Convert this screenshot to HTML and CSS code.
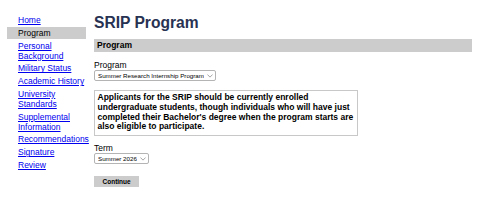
FILE: index.html
```html
<!DOCTYPE html>
<html lang="en">
<head>
    <meta charset="UTF-8">
    <meta name="viewport" content="width=device-width, initial-scale=1.0">
    <title>SRIP Program</title>
    <link rel="stylesheet" href="styles.css">
</head>
<body>
    <div class="page">
        <!-- Side Navigation -->
        <nav class="sidebar">
            <a class="nav-item" href="#">Home</a>
            <span class="nav-item current">Program</span>
            <a class="nav-item" href="#">Personal Background</a>
            <a class="nav-item" href="#">Military Status</a>
            <a class="nav-item" href="#">Academic History</a>
            <a class="nav-item" href="#">University Standards</a>
            <a class="nav-item" href="#">Supplemental Information</a>
            <a class="nav-item" href="#">Recommendations</a>
            <a class="nav-item" href="#">Signature</a>
            <a class="nav-item" href="#">Review</a>
        </nav>

        <!-- Main Form -->
        <main class="content">
            <h1 class="page-title">SRIP Program</h1>
            <div class="section-bar">Program</div>

            <label class="field-label" for="program">Program</label>
            <div class="select-wrap">
                <select id="program" class="select">
                    <option>Summer Research Internship Program</option>
                </select>
                <svg class="chevron" viewBox="0 0 8 5" width="6" height="4"><path d="M0.5 0.5 L4 4 L7.5 0.5" fill="none" stroke="#777" stroke-width="0.9"/></svg>
            </div>

            <div class="notice">
                Applicants for the SRIP should be currently enrolled undergraduate students, though individuals who will have just completed their Bachelor's degree when the program starts are also eligible to participate.
            </div>

            <label class="field-label" for="term">Term</label>
            <div class="select-wrap">
                <select id="term" class="select">
                    <option>Summer 2026</option>
                </select>
                <svg class="chevron" viewBox="0 0 8 5" width="6" height="4"><path d="M0.5 0.5 L4 4 L7.5 0.5" fill="none" stroke="#777" stroke-width="0.9"/></svg>
            </div>

            <div class="actions">
                <button class="btn" type="button">Continue</button>
            </div>
        </main>
    </div>
</body>
</html>
```

FILE: styles.css
```css
/* General Reset */
* {
    margin: 0;
    padding: 0;
    box-sizing: border-box;
}
body {
    font-family: "Liberation Sans", Arial, sans-serif;
    background: #fff;
    color: #000;
}
.page {
    display: flex;
    padding: 14px 9px 0 7px;
}
/* Sidebar */
.sidebar {
    width: 79px;
    flex-shrink: 0;
    margin-right: 8px;
    display: flex;
    flex-direction: column;
}
.nav-item {
    display: block;
    padding: 1.4px 0 1.4px 11px;
    font-size: 8.5px;
    line-height: 10px;
    color: #0000ee;
    text-decoration: underline;
}
.nav-item.current {
    background-color: #cccccc;
    color: #000;
    text-decoration: none;
    padding-top: 1.2px;
    padding-bottom: 1.2px;
}
/* Main content */
.content {
    flex: 1;
    display: flex;
    flex-direction: column;
    align-items: flex-start;
}
.page-title {
    font-size: 15.6px;
    line-height: 18px;
    color: #283252;
    margin-bottom: 7px;
}
.section-bar {
    align-self: stretch;
    background-color: #cccccc;
    font-size: 8.5px;
    font-weight: bold;
    line-height: 13px;
    padding: 0 3px;
    margin-bottom: 8px;
}
.field-label {
    font-size: 8.5px;
    line-height: 10px;
}
.select-wrap {
    position: relative;
    display: flex;
}
.select {
    appearance: none;
    -webkit-appearance: none;
    font-family: "Liberation Sans", Arial, sans-serif;
    font-size: 6.2px;
    height: 11px;
    line-height: 9px;
    padding: 0 11px 0 3px;
    border: 1px solid #b4b4b4;
    border-radius: 2px;
    background: #fff;
    color: #000;
}
.chevron {
    position: absolute;
    right: 3px;
    top: 4px;
}
.notice {
    width: 264px;
    margin-top: 9px;
    margin-bottom: 7px;
    border: 1px solid #c8c8c8;
    padding: 2px 2.5px 3px;
    font-size: 8.5px;
    font-weight: bold;
    line-height: 9.75px;
}
.actions {
    margin-top: 12px;
    display: flex;
}
.btn {
    font-family: "Liberation Sans", Arial, sans-serif;
    font-size: 6.5px;
    font-weight: bold;
    height: 11px;
    padding: 0 8.5px;
    border: none;
    background-color: #cccccc;
    color: #000;
}
```
